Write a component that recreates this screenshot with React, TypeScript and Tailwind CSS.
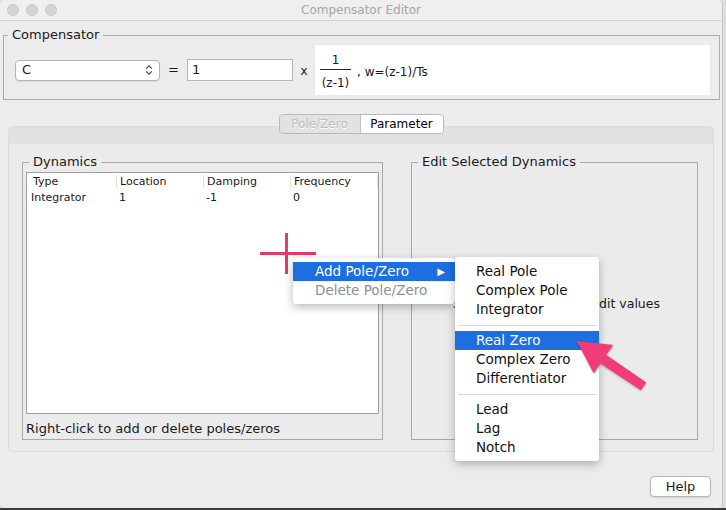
import React from 'react';

const highlight = 'bg-[#1d6ee0] text-white';

const PopupItem: React.FC<{ label: string; active?: boolean; disabled?: boolean; arrow?: boolean; indent: string }> = ({
  label,
  active,
  disabled,
  arrow,
  indent,
}) => (
  <div
    className={`h-[19px] flex items-center justify-between pr-[10px] text-[13.5px] leading-[19px] ${indent} ${
      active ? highlight : disabled ? 'text-[#8f8f8f]' : 'text-[#111]'
    }`}
  >
    <span>{label}</span>
    {arrow && <span className="text-[10px]">▶</span>}
  </div>
);

const Separator = () => (
  <div className="h-[12px] flex items-center px-[3px]">
    <div className="h-px w-full bg-[#d9d9d9]" />
  </div>
);

const App: React.FC = () => {
  return (
    <div className="w-[726px] h-[510px] bg-[#dedede] font-['DejaVu_Sans',sans-serif] text-[#1a1a1a] relative overflow-hidden">
      <div className="w-[723px] h-[508px] bg-[#ececec] rounded-[5px] flex flex-col border-r border-[#c4c4c4]">
        {/* title bar */}
        <div className="h-[21px] shrink-0 flex items-center border-b border-[#d3d3d3] bg-[#efefef] rounded-t-[5px]">
          <div className="w-[70px] flex gap-[7px] pl-[7px]">
            {[0, 1, 2].map((i) => (
              <span key={i} className="w-[12px] h-[12px] rounded-full bg-[#d4d4d4] border border-[#c8c8c8]" />
            ))}
          </div>
          <div className="flex-1 text-center text-[12px] text-[#a6a6a6]">Compensator Editor</div>
          <div className="w-[70px]" />
        </div>

        {/* compensator */}
        <fieldset className="mt-[6px] ml-[3px] mr-[2px] border border-[#ababab] pl-[11px] pr-[9px] pb-[4px]">
          <legend className="-ml-[7px] px-[4px] text-[13px] leading-[16px]">Compensator</legend>
          <div className="mt-[2px] flex items-center h-[50px]">
            <div className="w-[145px] h-[21px] bg-white border border-[#b4b4b4] rounded-[4px] shadow-[0_1px_1px_rgba(0,0,0,0.08)] flex items-center justify-between pl-[6px] pr-[6px] text-[13px]">
              <span>C</span>
              <svg width="8" height="12" viewBox="0 0 8 12" fill="none" stroke="#444" strokeWidth="1.2">
                <path d="M1.2 4.6 L4 1.8 L6.8 4.6" />
                <path d="M1.2 7.4 L4 10.2 L6.8 7.4" />
              </svg>
            </div>
            <span className="w-[27px] text-center text-[13px]">=</span>
            <div className="w-[106px] h-[22px] bg-white border border-[#b4b4b4] flex items-center pl-[4px] text-[13px]">1</div>
            <span className="w-[22px] text-center text-[12px] pt-[2px]">x</span>
            <div className="flex-1 h-[50px] bg-white flex items-center pl-[5px] text-[12px]">
              <div className="flex flex-col items-center w-[31px] pt-[4px]">
                <span className="leading-[17px]">1</span>
                <div className="h-px w-full bg-[#222]" />
                <span className="leading-[19px] pt-[4px]">(z-1)</span>
              </div>
              <span className="ml-[6px] mt-[3px]">, w=(z-1)/Ts</span>
            </div>
          </div>
        </fieldset>

        {/* tabs */}
        <div className="mt-[14px] flex justify-center relative z-10">
          <div className="flex h-[20px] border border-[#b9b9b9] rounded-[4px] overflow-hidden text-[12px]">
            <div className="w-[81px] flex items-center justify-center bg-[#e2e2e2] text-[#bdbdbd] [text-shadow:0_1px_0_#fff] border-r border-[#c4c4c4]">
              Pole/Zero
            </div>
            <div className="w-[82px] flex items-center justify-center bg-white text-black">Parameter</div>
          </div>
        </div>

        <div className="-mt-[8px] mx-[8px] rounded-[5px] border border-[#dbdbdb] bg-[#ebebeb] overflow-hidden">
          <div className="h-[17px] bg-[#e1e1e1]" />
          <div className="flex pt-[10px] pb-[11px] pl-[13px] gap-[28px]">
            {/* dynamics */}
            <fieldset className="w-[361px] h-[286px] border border-[#a9a9a9] px-[3px] flex flex-col">
              <legend className="ml-[3px] px-[4px] text-[13px] leading-[16px]">Dynamics</legend>
              <div className="mt-[2px] h-[242px] border border-[#a0a0a0] bg-white text-[11px]">
                <div className="grid grid-cols-[90px_87px_87px_87px] h-[17px] items-center">
                  <div className="pl-[6px] border-r border-[#e0e0e0] h-[13px] leading-[13px]">Type</div>
                  <div className="pl-[3px] border-r border-[#e0e0e0] h-[13px] leading-[13px]">Location</div>
                  <div className="pl-[3px] border-r border-[#e0e0e0] h-[13px] leading-[13px]">Damping</div>
                  <div className="pl-[3px] border-r border-[#e0e0e0] h-[13px] leading-[13px]">Frequency</div>
                </div>
                <div className="grid grid-cols-[90px_87px_87px_87px] h-[17px] items-center">
                  <div className="pl-[4px]">Integrator</div>
                  <div className="pl-[2px]">1</div>
                  <div className="pl-[2px]">-1</div>
                  <div className="pl-[2px]">0</div>
                </div>
              </div>
              <div className="pt-[7px] text-[13px] leading-[16px]">Right-click to add or delete poles/zeros</div>
            </fieldset>

            {/* edit selected */}
            <fieldset className="w-[287px] h-[286px] border border-[#a9a9a9] px-[3px] flex flex-col">
              <legend className="ml-[3px] px-[4px] text-[13px] leading-[16px]">Edit Selected Dynamics</legend>
              <div className="flex-1 flex items-center justify-center text-[12.5px] pl-[4px]">Select a single row to edit values</div>
            </fieldset>
          </div>
        </div>

        <div className="mt-[24px] flex justify-end pr-[11px]">
          <div className="w-[61px] h-[21px] bg-white border border-[#b6b6b6] rounded-[4px] shadow-[0_1px_1px_rgba(0,0,0,0.1)] flex items-center justify-center text-[13px]">
            Help
          </div>
        </div>
      </div>
      <div className="h-[2px] bg-[#3b3b3b]" />

      {/* crosshair cursor */}
      <div className="absolute left-[260px] top-[233px] w-[56px] h-[41px]">
        <div className="absolute left-0 top-[19px] w-[56px] h-[3px] bg-[#e8396f]" />
        <div className="absolute left-[25px] top-0 w-[3px] h-[41px] bg-[#e8396f]" />
      </div>

      {/* context menu */}
      <div className="absolute left-[293px] top-[258px] w-[162px] py-[4px] bg-white shadow-[0_3px_10px_rgba(0,0,0,0.28)] rounded-[3px]">
        <PopupItem label="Add Pole/Zero" active arrow indent="pl-[22px]" />
        <PopupItem label="Delete Pole/Zero" disabled indent="pl-[22px]" />
      </div>

      {/* submenu */}
      <div className="absolute left-[455px] top-[257px] w-[144px] pt-[5px] pb-[4px] bg-white shadow-[0_3px_10px_rgba(0,0,0,0.28)] rounded-[3px]">
        <PopupItem label="Real Pole" indent="pl-[21px]" />
        <PopupItem label="Complex Pole" indent="pl-[21px]" />
        <PopupItem label="Integrator" indent="pl-[21px]" />
        <Separator />
        <PopupItem label="Real Zero" active indent="pl-[21px]" />
        <PopupItem label="Complex Zero" indent="pl-[21px]" />
        <PopupItem label="Differentiator" indent="pl-[21px]" />
        <Separator />
        <PopupItem label="Lead" indent="pl-[21px]" />
        <PopupItem label="Lag" indent="pl-[21px]" />
        <PopupItem label="Notch" indent="pl-[21px]" />
      </div>

      {/* annotation arrow */}
      <svg className="absolute left-[570px] top-[330px]" width="82" height="66" viewBox="0 0 82 66">
        <polygon
          points="8,12 42,15.5 35.3,25.1 75.2,52.7 70.8,59.3 30.3,32.5 23.8,42"
          fill="#f03d78"
          stroke="#f03d78"
          strokeWidth="1.5"
          strokeLinejoin="round"
          style={{ filter: 'drop-shadow(0 1px 1px rgba(0,0,0,0.25))' }}
        />
      </svg>
    </div>
  );
};

export default App;
